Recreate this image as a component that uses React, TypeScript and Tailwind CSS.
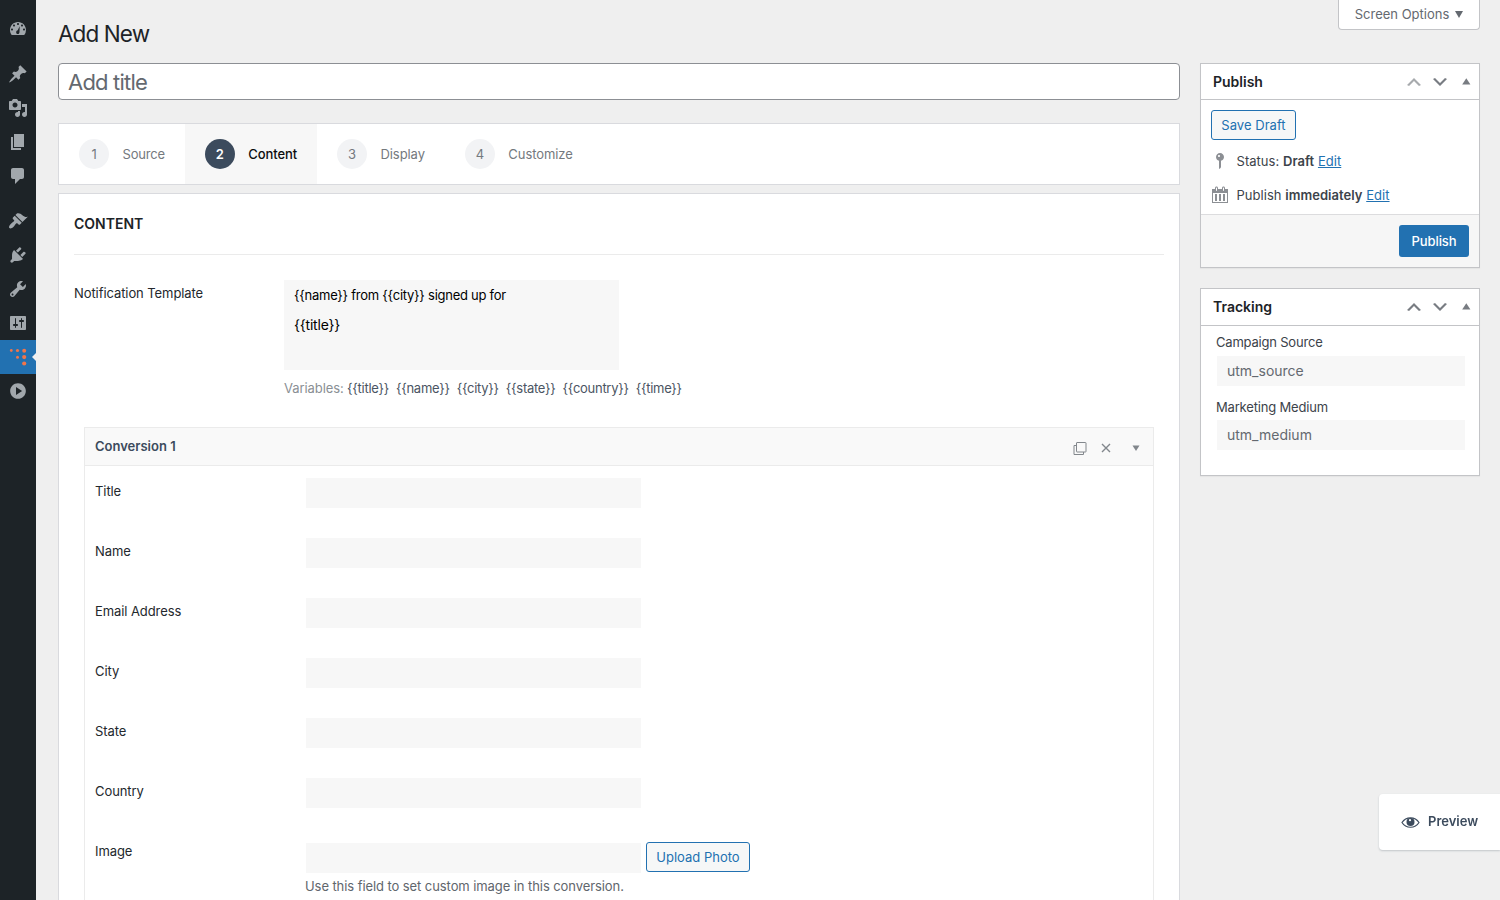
import type { ReactNode } from "react";

const icons = {
  dashboard:
    "M3.76 17h12.48A7.96 7.96 0 0 0 18 12c0-4.42-3.58-8-8-8s-8 3.58-8 8c0 1.89.66 3.63 1.76 5zM10 5c.55 0 1 .45 1 1s-.45 1-1 1-1-.45-1-1 .45-1 1-1zM6 6.5c.55 0 1 .45 1 1s-.45 1-1 1-1-.45-1-1 .45-1 1-1zM14 6.5c.55 0 1 .45 1 1s-.45 1-1 1-1-.45-1-1 .45-1 1-1zM4 10.500c.55 0 1 .45 1 1s-.45 1-1 1-1-.45-1-1 .45-1 1-1zM16 10.500c.55 0 1 .45 1 1s-.45 1-1 1-1-.45-1-1 .45-1 1-1zM11.700 8.200l-.2 5.200c.1 1.400-.5 2.600-1.600 2.600-1.200 0-1.900-1-1.700-2.100.1-.8.800-1.400 1.500-1.600z",
  post: "M10.44 3.02l1.82-1.82 6.36 6.35-1.83 1.82c-1.05-.68-2.48-.57-3.41.36l-.75.75c-.92.93-1.04 2.35-.35 3.41l-1.83 1.82-2.41-2.41-2.8 2.79c-.42.42-3.38 2.71-3.8 2.29s1.86-3.39 2.28-3.81l2.79-2.79L4.1 9.36l1.83-1.82c1.05.69 2.48.57 3.4-.36l.75-.75c.93-.92 1.05-2.35.36-3.41z",
  media:
    "M13 11V4c0-.55-.45-1-1-1h-1.670L9 1H5L3.670 3H2c-.55 0-1 .45-1 1v7c0 .55.45 1 1 1h10c.55 0 1-.45 1-1zM7 4.500c1.380 0 2.500 1.120 2.500 2.500S8.380 9.500 7 9.500 4.500 8.380 4.500 7 5.620 4.500 7 4.500zM14 6h5v10.500c0 1.380-1.120 2.500-2.500 2.500S14 17.880 14 16.500s1.120-2.500 2.500-2.500c.17 0 .34.02.5.05V9h-3V6zm-4 8.050V13h2v3.500c0 1.380-1.120 2.500-2.500 2.500S7 17.880 7 16.500 8.120 14 9.500 14c.17 0 .34.02.5.05z",
  page: "M6 15V2h10v13H6zm-1 1h8v2H3V5h2v11z",
  comments: "M5 2h9c1.1 0 2 .9 2 2v7c0 1.1-.9 2-2 2h-2l-5 5v-5H5c-1.1 0-2-.9-2-2V4c0-1.1.9-2 2-2z",
  appearance:
    "M14.48 11.06L7.41 3.99l1.5-1.5c.5-.56 2.3-.47 3.51.32 1.21.8 1.43 1.28 2.91 2.1 1.18.64 2.45 1.26 4.45.85zm-.71.71L6.7 4.7 4.93 6.47c-.39.39-.39 1.02 0 1.41l1.06 1.06c.39.39.39 1.03 0 1.42-.6.6-1.43 1.11-2.21 1.69-.35.26-.7.53-1.01.84C1.43 14.23.4 16.08 1.4 17.07c.99 1 2.84-.03 4.18-1.36.31-.31.58-.66.85-1.02.57-.78 1.08-1.61 1.69-2.21.39-.39 1.02-.39 1.41 0l1.06 1.06c.39.39 1.02.39 1.41 0z",
  plugins:
    "M13.11 4.36L9.87 7.6 8 5.73l3.24-3.24c.35-.34 1.05-.2 1.56.32.52.51.66 1.21.31 1.55zm-8 1.77l.91-1.12 9.01 9.01-1.19.84c-.71.71-2.63 1.16-3.82 1.16H6.14L4.9 17.26c-.59.59-1.54.59-2.12 0-.59-.58-.59-1.53 0-2.12l1.24-1.24v-3.88c0-1.13.4-3.19 1.09-3.89zm7.26 3.97l3.24-3.24c.34-.35 1.04-.21 1.55.31.52.51.66 1.21.31 1.55l-3.24 3.25z",
  tools:
    "M16.68 9.77c-1.34 1.34-3.3 1.67-4.95.99l-5.41 6.52c-.99.99-2.59.99-3.58 0s-.99-2.59 0-3.57l6.52-5.42c-.68-1.65-.35-3.61.99-4.95 1.28-1.28 3.12-1.62 4.72-1.06l-2.89 2.89 2.82 2.82 2.86-2.87c.53 1.58.18 3.39-1.08 4.65zM3.81 16.21c.4.39 1.04.39 1.43 0 .4-.4.4-1.04 0-1.43-.39-.4-1.03-.4-1.43 0-.39.39-.39 1.03 0 1.43z",
  settings:
    "M18 16V4c0-.55-.45-1-1-1H3c-.55 0-1 .45-1 1v12c0 .55.45 1 1 1h14c.55 0 1-.45 1-1zM8 11h1c.55 0 1 .45 1 1s-.45 1-1 1H8v1.500c0 .28-.22.5-.5.5s-.5-.22-.5-.5V13H6c-.55 0-1-.45-1-1s.45-1 1-1h1V5.500c0-.28.22-.5.5-.5s.5.22.5.5V11zm5-2h-1c-.55 0-1-.45-1-1s.45-1 1-1h1V5.500c0-.28.22-.5.5-.5s.5.22.5.5V7h1c.55 0 1 .45 1 1s-.45 1-1 1h-1v5.500c0 .28-.22.5-.5.5s-.5-.22-.5-.5V9z",
  collapse:
    "M10 2.16c4.33 0 7.84 3.51 7.84 7.84s-3.51 7.84-7.84 7.84S2.16 14.33 2.16 10 5.67 2.16 10 2.16zM8 6.12v7.76L14.12 10z",
  up: "M15 14l-5-5-5 5-2-1 7-7 7 7z",
  down: "M5 6l5 5 5-5 2 1-7 7-7-7z",
  pin: "M14 6c0 1.86-1.28 3.41-3 3.86V16c0 1-2 2-2 2V9.86c-1.72-.45-3-2-3-3.86 0-2.21 1.79-4 4-4s4 1.79 4 4zM8 5c0 .55.45 1 1 1s1-.45 1-1-.45-1-1-1-1 .45-1 1z",
  calendar:
    "M15 4h3v14H2V4h3V3c0-.83.67-1.500 1.500-1.500S8 2.170 8 3v1h4V3c0-.83.67-1.500 1.500-1.500S15 2.170 15 3v1zM6 3v2.500c0 .28.22.5.5.5s.5-.22.5-.5V3c0-.28-.22-.5-.5-.5S6 2.720 6 3zm7 0v2.500c0 .28.22.5.5.5s.5-.22.5-.5V3c0-.28-.22-.5-.5-.5s-.5.22-.5.5zM17 17V8H3v9h14zM7 16V9H5v7h2zm4 0V9H9v7h2zm4 0V9h-2v7h2z",
};

type IconName = keyof typeof icons;

function Icon({ name, className = "" }: { name: IconName; className?: string }) {
  return (
    <svg viewBox="0 0 20 20" className={`size-5 shrink-0 fill-current ${className}`}>
      <path fillRule="evenodd" d={icons[name]} />
    </svg>
  );
}

function MenuItem({ name }: { name: IconName }) {
  return (
    <div className="flex h-[34px] items-center justify-center pr-px">
      <Icon name={name} />
    </div>
  );
}

function Sidebar() {
  return (
    <nav className="w-9 shrink-0 bg-[#1d2327] pt-[11px] text-[#a1a7ac]">
      <MenuItem name="dashboard" />
      <div className="pt-3">
        <MenuItem name="post" />
        <MenuItem name="media" />
        <MenuItem name="page" />
        <MenuItem name="comments" />
      </div>
      <div className="pt-[11px]">
        <MenuItem name="appearance" />
        <MenuItem name="plugins" />
        <MenuItem name="tools" />
        <MenuItem name="settings" />
        <div className="h-[34px] bg-[#2271b1]">
          <svg viewBox="0 0 36 34" className="h-[34px] w-9">
            <g fill="#f0754a">
              <circle cx="11.300" cy="10.500" r="1.400" />
              <circle cx="17.500" cy="10.500" r="1.600" />
              <circle cx="24.200" cy="10.700" r="2" />
              <circle cx="17.500" cy="17.200" r="1.500" />
              <circle cx="24.200" cy="17.100" r="2.100" />
              <circle cx="24.200" cy="23.500" r="2.100" />
            </g>
            <path d="M36 13v8l-4-4z" fill="#f0f0f1" />
          </svg>
        </div>
        <MenuItem name="collapse" />
      </div>
    </nav>
  );
}

function Step({ n, label, active = false, track = "" }: { n: number; label: string; active?: boolean; track?: string }) {
  return (
    <div className={`flex items-center gap-[13.5px] px-5 ${active ? "bg-[#f7f7f7] text-[#0c0d0e]" : "text-[#74797e]"}`}>
      <span
        className={`flex size-[30px] items-center justify-center rounded-full ${
          active ? "bg-[#3c4b5d] font-semibold text-white" : "bg-[#f2f3f5]"
        }`}
      >
        {n}
      </span>
      <span className={`${active ? "font-medium" : ""} ${track}`}>{label}</span>
    </div>
  );
}

function Field({ label }: { label: string }) {
  return (
    <div className="flex h-[60px]">
      <span className="w-[211px] pt-[3px]">{label}</span>
      <div className="h-[30px] w-[335px] bg-[#f7f7f7]" />
    </div>
  );
}

function Card({ title, children, dim = false, head }: { title: string; children: ReactNode; dim?: boolean; head: string }) {
  return (
    <section className="border border-[#c3c4c7] bg-white shadow-[0_1px_1px_rgba(0,0,0,0.04)]">
      <header className={`flex items-center border-b border-[#c3c4c7] pl-3 pr-[3px] ${head}`}>
        <h2 className="flex-1 text-sm font-semibold tracking-normal text-[#1d2327]">{title}</h2>
        <div className="flex items-center gap-1.5 text-[#787c82]">
          <Icon name="up" className={dim ? "text-[#a7aaad]" : ""} />
          <Icon name="down" />
          <svg viewBox="0 0 20 20" className="size-5 fill-current">
            <path d="M6.200 12.500l4.100-6.300 4.100 6.300z" />
          </svg>
        </div>
      </header>
      {children}
    </section>
  );
}

const fields = ["Title", "Name", "Email Address", "City", "State", "Country"];
const variables = ["{{title}}", "{{name}}", "{{city}}", "{{state}}", "{{country}}", "{{time}}"];

export default function App() {
  return (
    <div className="flex h-[900px] w-[1500px] overflow-hidden bg-[#efefef] font-['Inter',sans-serif] text-[13px] leading-5 tracking-[-0.08px] text-[#3c434a]">
      <Sidebar />
      <div className="flex-1 pl-[22px] pr-5">
        <div className="flex h-[63px] items-start justify-between">
          <h1 className="pt-[18px] text-[22.5px] leading-8 tracking-[-0.9px] text-[#1d2327]">Add New</h1>
          <div className="flex h-[30px] w-[142px] items-center justify-center gap-1.5 rounded-b border border-t-0 border-[#c3c4c7] bg-white text-[#646970]">
            <span className="pb-0.5 tracking-normal">Screen Options</span>
            <svg viewBox="0 0 8 7" className="h-[7px] w-2 fill-current">
              <path d="M0 0h8L4 7z" />
            </svg>
          </div>
        </div>
        <div className="flex gap-5">
          <main className="w-[1122px]">
            <div className="flex h-[37px] items-center rounded border border-[#8c8f94] bg-white px-[9px] text-[22px] tracking-[-0.8px] text-[#646970]">
              Add title
            </div>
            <div className="mt-[23px] flex h-[62px] border border-[#d9dade] bg-white">
              <Step n={1} label="Source" track="tracking-[-0.2px]" />
              <Step n={2} label="Content" active track="tracking-[-0.1px]" />
              <Step n={3} label="Display" />
              <Step n={4} label="Customize" />
            </div>
            <div className="mt-2 h-[760px] border border-[#d9dade] bg-white px-[15px]">
              <h2 className="flex h-[61px] items-center border-b border-[#ebebeb] text-sm font-semibold tracking-normal text-[#1d2327]">CONTENT</h2>
              <div className="flex pt-[25px]">
                <span className="w-[210px] pt-[3px] text-[#23282d]">Notification Template</span>
                <div>
                  <div className="h-[90px] w-[335px] bg-[#f7f7f7] px-2.5 leading-[30px] text-black">
                    <p className="tracking-[-0.26px]">{"{{name}} from {{city}} signed up for"}</p>
                    <p className="text-sm leading-[30px] tracking-[-0.2px]">{"{{title}}"}</p>
                  </div>
                  <div className="flex gap-[7px] pt-2 tracking-[-0.28px] text-[#4b5563]">
                    <p>
                      <span className="tracking-[-0.08px] text-[#8a8f94]">Variables:</span> {variables[0]}
                    </p>
                    {variables.slice(1).map((v) => (
                      <p key={v}>{v}</p>
                    ))}
                  </div>
                </div>
              </div>
              <div className="mx-2.5 mt-[29px] h-[600px] border border-[#ebebeb]">
                <div className="flex h-[38px] items-center border-b border-[#ebebeb] bg-[#f9f9f9] pl-2.5 pr-[13px]">
                  <h3 className="flex-1 pb-0.5 font-semibold tracking-normal text-[#3c4b5d]">Conversion 1</h3>
                  <div className="flex items-center pt-[3px] text-[#82878c]">
                    <svg viewBox="0 0 14 14" className="size-3.5 fill-none stroke-current">
                      <rect x="3.500" y="1.500" width="9.500" height="9.500" rx=".5" />
                      <path d="M3 4.500H1v9h9.500V11" />
                    </svg>
                    <svg viewBox="0 0 10 10" className="ml-3.5 size-2.5 stroke-current">
                      <path d="M1 1l8 8M9 1l-8 8" strokeWidth="1.400" />
                    </svg>
                    <svg viewBox="0 0 8 6" className="ml-[21px] h-1.5 w-2 fill-current">
                      <path d="M.5.5h7L4 6z" />
                    </svg>
                  </div>
                </div>
                <div className="pl-2.5 pt-3 text-[#23282d]">
                  {fields.map((f) => (
                    <Field key={f} label={f} />
                  ))}
                  <div className="flex pt-[3px]">
                    <span className="w-[210px]">Image</span>
                    <div className="pt-px">
                      <div className="flex gap-[5px]">
                        <div className="ml-px mt-px h-[30px] w-[335px] bg-[#f7f7f7]" />
                        <button className="h-[30px] w-[104px] rounded-[3px] border border-[#2271b1] bg-[#f6f7f7] tracking-normal text-[#2271b1]">Upload Photo</button>
                      </div>
                      <p className="pt-[3px] text-[#5f666d]">Use this field to set custom image in this conversion.</p>
                    </div>
                  </div>
                </div>
              </div>
            </div>
          </main>
          <aside className="w-[280px]">
            <Card title="Publish" dim head="h-9">
              <div className="h-[114px] px-2.5 pt-2.5 tracking-[0.04px]">
                <button className="h-[30px] w-[85px] rounded-[3px] border border-[#2271b1] bg-[#f6f7f7] text-[#2271b1]">Save Draft</button>
                <div className="flex h-[34px] items-center pt-2">
                  <Icon name="pin" className="-ml-px text-[#8c8f94]" />
                  <p className="pl-[6.5px]">
                    Status: <b className="font-semibold">Draft</b> <a className="text-[#2271b1] underline">Edit</a>
                  </p>
                </div>
                <div className="flex h-[34px] items-center pt-2">
                  <Icon name="calendar" className="-ml-px text-[#8c8f94]" />
                  <p className="pl-[6.5px]">
                    Publish <b className="font-semibold">immediately</b> <a className="text-[#2271b1] underline">Edit</a>
                  </p>
                </div>
              </div>
              <div className="flex h-[53px] justify-end border-t border-[#dcdcde] bg-[#f6f6f6] px-2.5 pt-2.5">
                <button className="h-8 w-[70px] rounded-[3px] bg-[#2271b1] font-medium text-white">Publish</button>
              </div>
            </Card>
            <div className="h-5" />
            <Card title="Tracking" head="h-[37px]">
              <div className="h-[149px] px-[15px] pt-1.5">
                <p className="tracking-[-0.2px]">Campaign Source</p>
                <div className="ml-px mr-[-1px] mt-1 h-[30px] w-[248px] bg-[#f7f7f7] px-2.5 text-sm leading-[30px] tracking-normal text-[#646970]">utm_source</div>
                <p className="pt-[11px] tracking-[-0.18px]">Marketing Medium</p>
                <div className="ml-px mt-[3px] h-[30px] w-[248px] bg-[#f7f7f7] px-2.5 text-sm leading-[30px] tracking-normal text-[#646970]">utm_medium</div>
              </div>
            </Card>
          </aside>
        </div>
      </div>
      <div className="fixed left-[1379px] top-[794px] flex h-[56px] w-[121px] items-center rounded-l bg-white pl-[22px] font-semibold tracking-normal text-[#3c4b5d] shadow-[0_1px_2px_rgba(60,75,93,0.25)]">
        <svg viewBox="0 0 19 13" className="h-[13px] w-[19px]">
          <path d="M1 6.500C5 .2 14 .2 18 6.500 14 12.800 5 12.800 1 6.500z" fill="none" stroke="currentColor" strokeWidth="1.200" />
          <circle cx="9.500" cy="6" r="4" fill="currentColor" />
          <circle cx="9" cy="4.200" r="1.100" fill="#fff" />
        </svg>
        <span className="pb-0.5 pl-2">Preview</span>
      </div>
    </div>
  );
}
